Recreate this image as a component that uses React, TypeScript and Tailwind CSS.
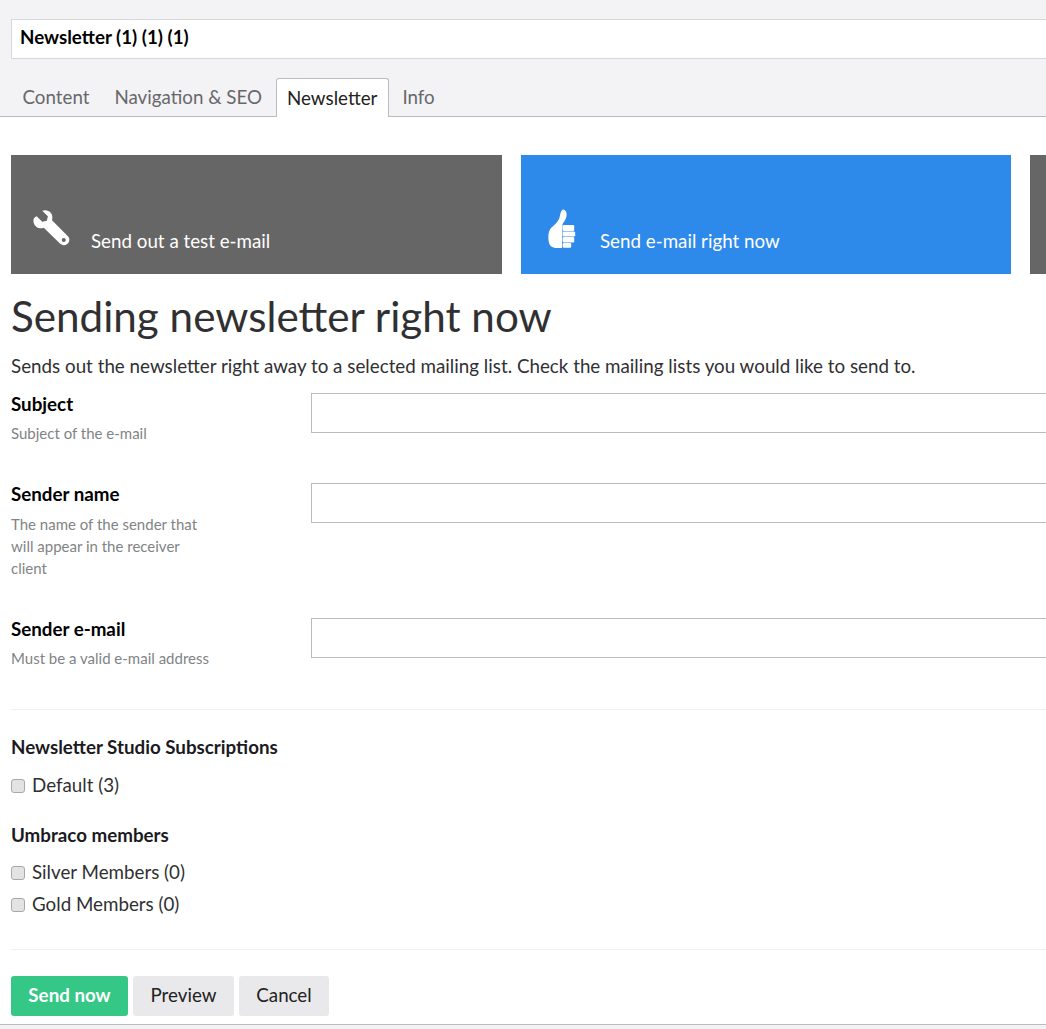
const lato = "font-['Lato','Liberation_Sans',sans-serif]";

function Wrench() {
  return (
    <svg width="41" height="41" viewBox="0 0 40 40" className="absolute left-[21px] top-[53px]">
      <path
        fill="#fff"
        fillRule="evenodd"
        d="M1.5 11 C1 15 3 18.5 6.5 19.5 C8.5 20 10 19.8 11.5 19.2 L27 34.5 C29 36.6 32 37 34.5 35 C37 33 37 29.5 35 27.5 L19.5 12 C20.2 9.5 20 7 18.6 5 C16.6 2.6 13 1.6 10 2.8 L15.5 8 L14.5 12.5 L10 13.5 L4.5 8 C3 8.5 2 9.5 1.5 11 Z M31 29.2 A2 2 0 1 0 31 33.2 A2 2 0 1 0 31 29.2 Z"
      />
    </svg>
  );
}

function Thumb() {
  return (
    <svg width="32" height="42" viewBox="0 0 32 42" className="absolute left-[25px] top-[53px]">
      <path
        fill="#fff"
        d="M17 1.5 C20 2 21 5 20.5 8 C20 11 18 14 16.5 16 L16 40 L11 40 C6 40 3 38 2.5 32 C2 27 2.5 23 5 20 C8 17 11 15 13 11 C14.5 8 14 3 17 1.5 Z"
      />
      <rect x="16.7" y="17" width="11.5" height="6" rx="1.2" fill="#fff" />
      <rect x="16.7" y="23.6" width="12.5" height="4.8" rx="1.2" fill="#fff" />
      <rect x="16.7" y="29" width="11.5" height="5.4" rx="1.2" fill="#fff" />
      <rect x="16.7" y="35" width="8.5" height="4.8" rx="1.2" fill="#fff" />
    </svg>
  );
}

function Card({ bg, label, icon, textLeft, width }: { bg: string; label: string; icon?: React.ReactNode; textLeft: string; width: string }) {
  return (
    <div className={`relative h-[119px] shrink-0 ${bg} ${width}`}>
      {icon}
      <span className={`absolute top-[73px] text-[18.75px] leading-[25px] text-white ${textLeft}`}>{label}</span>
    </div>
  );
}

function Field({ title, lines, height }: { title: string; lines: string[]; height: string }) {
  return (
    <div className={`flex ${height}`}>
      <div className="w-[300px] shrink-0">
        <div className="text-[18.75px] font-bold leading-[22px] text-black">{title}</div>
        <div className={`${lines.length === 1 ? "mt-[7px]" : "mt-[8px]"} text-[15px] leading-[22px] text-[#7f8485]`}>
          {lines.map((l) => (
            <div key={l}>{l}</div>
          ))}
        </div>
      </div>
      <div className="h-[40px] flex-1 border border-[#bbbbbb] bg-white" />
    </div>
  );
}

function Check({ label }: { label: string }) {
  return (
    <label className="flex h-[32px] items-center">
      <span className="mt-[1px] h-[14px] w-[14px] shrink-0 rounded-[3px] border border-[#a9a9a9] bg-[#e3e3e3]" />
      <span className="ml-[7px] text-[18.75px] leading-[24px] text-[#303033]">{label}</span>
    </label>
  );
}

export default function App() {
  return (
    <div className={`h-[1029px] w-[1046px] overflow-hidden bg-white ${lato}`}>
      <div className="h-[117px] border-b border-[#bbbabf] bg-[#f3f3f5] pt-[19px]">
        <div className="ml-[11px] flex h-[40px] w-[1100px] items-center border border-[#d8d7d9] bg-white pb-[3px] pl-[8px] text-[18.75px] font-bold text-black">
          Newsletter (1) (1) (1)
        </div>
        <div className="mt-[19px] flex h-[39px] pl-[11px] text-[18.75px] leading-[37px] text-[#68676b]">
          <div className="px-[11.5px]">Content</div>
          <div className="ml-[2px] px-[11.5px]">Navigation &amp; SEO</div>
          <div className="z-10 ml-[2.5px] h-[39px] rounded-t-[3px] border border-b-0 border-[#bbbabf] bg-white pl-[10px] pr-[11px] text-[#222]">
            Newsletter
          </div>
          <div className="ml-[1px] px-[12px]">Info</div>
        </div>
      </div>

      <div className="pl-[11px] pt-[38px]">
        <div className="flex w-[1100px] gap-[19px]">
          <Card bg="bg-[#666666]" width="w-[491px]" label="Send out a test e-mail" textLeft="left-[80px]" icon={<Wrench />} />
          <Card bg="bg-[#2e8aea]" width="w-[490px]" label="Send e-mail right now" textLeft="left-[79px]" icon={<Thumb />} />
          <Card bg="bg-[#666666]" width="w-[300px]" label="" textLeft="left-[80px]" />
        </div>

        <h1 className="mt-[14px] text-[42.2px] font-normal leading-[56px] text-[#303033]">Sending newsletter right now</h1>
        <p className="mt-[9px] whitespace-nowrap text-[18.8px] leading-[25px] text-[#303033]">
          Sends out the newsletter right away to a selected mailing list. Check the mailing lists you would like to send to.
        </p>

        <div className="mt-[15px] w-[1100px]">
          <Field title="Subject" lines={["Subject of the e-mail"]} height="h-[90px]" />
          <Field
            title="Sender name"
            lines={["The name of the sender that", "will appear in the receiver", "client"]}
            height="h-[135px]"
          />
          <Field title="Sender e-mail" lines={["Must be a valid e-mail address"]} height="h-[91px]" />
        </div>

        <div className="w-[1100px] border-t border-[#f0f0f2]" />

        <div className="mt-[26px] text-[18.75px] font-bold leading-[22px] text-[#1b1b1f]">Newsletter Studio Subscriptions</div>
        <div className="mt-[11px]">
          <Check label="Default (3)" />
        </div>
        <div className="mt-[23px] text-[18.75px] font-bold leading-[22px] text-[#1b1b1f]">Umbraco members</div>
        <div className="mt-[10px]">
          <Check label="Silver Members (0)" />
          <Check label="Gold Members (0)" />
        </div>

        <div className="mt-[29px] w-[1100px] border-t border-[#f0f0f2]" />

        <div className="mt-[26px] flex gap-[5px] text-[18.75px] leading-[38px]">
          <div className="h-[40px] w-[117px] rounded-[3px] bg-[#35c786] text-center font-bold text-white">Send now</div>
          <div className="h-[40px] w-[101px] rounded-[3px] bg-[#e9e9eb] text-center text-[#222]">Preview</div>
          <div className="h-[40px] w-[90px] rounded-[3px] bg-[#e9e9eb] text-center text-[#222]">Cancel</div>
        </div>
      </div>

      <div className="mt-[8px] h-[5px] border-t border-[#bbbabf] bg-[#f3f3f5]" />
    </div>
  );
}
